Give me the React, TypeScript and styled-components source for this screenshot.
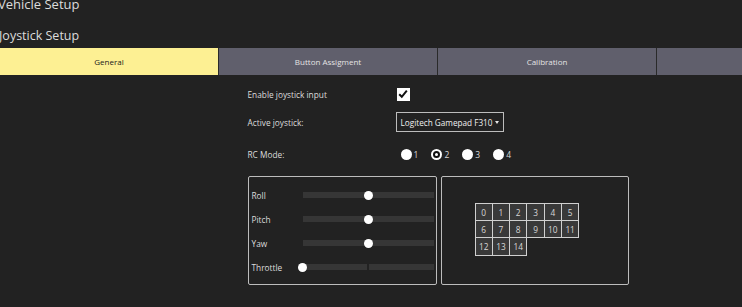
import React from 'react';
import styled, { createGlobalStyle } from 'styled-components';

const GlobalStyle = createGlobalStyle`
  html, body {
    margin: 0;
    padding: 0;
    background: #222222;
    overflow: hidden;
  }
  body {
    font-family: 'Open Sans', 'DejaVu Sans', sans-serif;
    color: #dcdcdc;
  }
`;

const Page = styled.div`
  width: 876px;
  height: 307px;
  display: flex;
  flex-direction: column;
`;

const PageTitle = styled.div`
  font-size: 13px;
  line-height: 16px;
  height: 10px;
  margin: -4px 0 0 -2px;
  white-space: nowrap;
`;

const SectionTitle = styled.div`
  font-size: 12.5px;
  line-height: 16px;
  margin: 22px 0 4px -1px;
  white-space: nowrap;
`;

const TabBar = styled.div`
  display: flex;
  height: 27px;
`;

const Tab = styled.div<{ active?: boolean }>`
  flex: 0 0 218px;
  border-right: 1px solid #2a2a2a;
  display: flex;
  align-items: center;
  justify-content: center;
  font-size: 8px;
  background: ${(p) => (p.active ? '#fdf093' : '#605f6c')};
  color: ${(p) => (p.active ? '#1a1a1a' : '#e4e4e4')};
`;

const Content = styled.div`
  width: 381px;
  margin: 0 auto;
  display: flex;
  flex-direction: column;
`;

const Row = styled.div<{ h: number; top: number }>`
  display: flex;
  align-items: center;
  height: ${(p) => p.h}px;
  margin-top: ${(p) => p.top}px;
`;

const Label = styled.div`
  width: 149px;
  font-size: 8.3px;
  white-space: nowrap;
`;

const CheckBox = styled.div`
  width: 13px;
  height: 13px;
  background: #ffffff;
  display: flex;
  align-items: center;
  justify-content: center;
`;

const Select = styled.div`
  width: 106px;
  height: 18px;
  border: 1px solid #bdbdbd;
  box-sizing: content-box;
  display: flex;
  align-items: center;
  justify-content: space-between;
  margin-left: -1px;
  font-size: 8.2px;
  color: #f0f0f0;
  white-space: nowrap;
  & span {
    padding-left: 4px;
  }
`;

const Caret = styled.div`
  width: 0;
  height: 0;
  border-left: 2.5px solid transparent;
  border-right: 2.5px solid transparent;
  border-top: 3px solid #e6e6e6;
  margin-right: 4px;
`;

const RadioGroup = styled.div`
  display: flex;
  gap: 13px;
  margin-left: 4px;
`;

const RadioOption = styled.div`
  display: flex;
  align-items: center;
  gap: 2px;
  font-size: 8.5px;
  color: #d8d8d8;
`;

const RadioCircle = styled.div<{ checked?: boolean }>`
  width: 11px;
  height: 11px;
  border-radius: 50%;
  background: #ffffff;
  box-sizing: border-box;
  display: flex;
  align-items: center;
  justify-content: center;
  &::after {
    content: '';
    display: ${(p) => (p.checked ? 'block' : 'none')};
    width: 3px;
    height: 3px;
    border-radius: 50%;
    background: #ffffff;
    border: 2px solid #111111;
  }
`;

const Panels = styled.div`
  display: flex;
  gap: 4px;
  margin-top: 16px;
`;

const Panel = styled.div<{ w: number }>`
  width: ${(p) => p.w}px;
  height: 109px;
  border: 1px solid #bdbdbd;
  border-radius: 2px;
  box-sizing: border-box;
`;

const SliderList = styled.div`
  display: flex;
  flex-direction: column;
  gap: 18px;
  padding: 15px 2px 0 3px;
`;

const SliderRow = styled.div`
  display: flex;
  align-items: center;
  height: 6px;
`;

const SliderLabel = styled.div`
  width: 51px;
  font-size: 8.3px;
`;

const Track = styled.div`
  position: relative;
  flex: 1;
  height: 6px;
  display: flex;
  gap: 2px;
`;

const TrackPart = styled.div`
  flex: 1;
  background: #363636;
`;

const Thumb = styled.div`
  position: absolute;
  top: -1.5px;
  width: 9px;
  height: 9px;
  margin-left: -4.5px;
  border-radius: 50%;
  background: #ffffff;
`;

const ButtonGrid = styled.div`
  display: grid;
  grid-template-columns: repeat(6, 17.3px);
  grid-auto-rows: 17.2px;
  margin: 26px 0 0 33px;
`;

const Cell = styled.div`
  border: 1px solid #d0d0d0;
  margin: 0 -1px -1px 0;
  background: #393939;
  display: flex;
  align-items: center;
  justify-content: center;
  font-size: 8.3px;
  color: #d8d8d8;
`;

const sliders = [
  { name: 'Roll', pos: 50, split: false },
  { name: 'Pitch', pos: 50, split: false },
  { name: 'Yaw', pos: 50, split: false },
  { name: 'Throttle', pos: 0, split: true },
];

export default function App() {
  return (
    <Page>
      <GlobalStyle />
      <PageTitle>Vehicle Setup</PageTitle>
      <SectionTitle>Joystick Setup</SectionTitle>
      <TabBar>
        <Tab active>General</Tab>
        <Tab>Button Assigment</Tab>
        <Tab>Calibration</Tab>
        <Tab />
      </TabBar>
      <Content>
        <Row h={14} top={12}>
          <Label>Enable joystick input</Label>
          <CheckBox>
            <svg width="10" height="10" viewBox="0 0 10 10">
              <path d="M1.2 5.2 L3.8 7.8 L8.8 1.6" stroke="#111" strokeWidth="2" fill="none" />
            </svg>
          </CheckBox>
        </Row>
        <Row h={20} top={11}>
          <Label>Active joystick:</Label>
          <Select>
            <span>Logitech Gamepad F310</span>
            <Caret />
          </Select>
        </Row>
        <Row h={12} top={16}>
          <Label>RC Mode:</Label>
          <RadioGroup>
            {[1, 2, 3, 4].map((n) => (
              <RadioOption key={n}>
                <RadioCircle checked={n === 2} />
                {n}
              </RadioOption>
            ))}
          </RadioGroup>
        </Row>
        <Panels>
          <Panel w={189}>
            <SliderList>
              {sliders.map((s) => (
                <SliderRow key={s.name}>
                  <SliderLabel>{s.name}</SliderLabel>
                  <Track>
                    <TrackPart />
                    {s.split && <TrackPart />}
                    <Thumb style={{ left: `${s.pos}%` }} />
                  </Track>
                </SliderRow>
              ))}
            </SliderList>
          </Panel>
          <Panel w={188}>
            <ButtonGrid>
              {Array.from({ length: 15 }, (_, i) => (
                <Cell key={i}>{i}</Cell>
              ))}
            </ButtonGrid>
          </Panel>
        </Panels>
      </Content>
    </Page>
  );
}
